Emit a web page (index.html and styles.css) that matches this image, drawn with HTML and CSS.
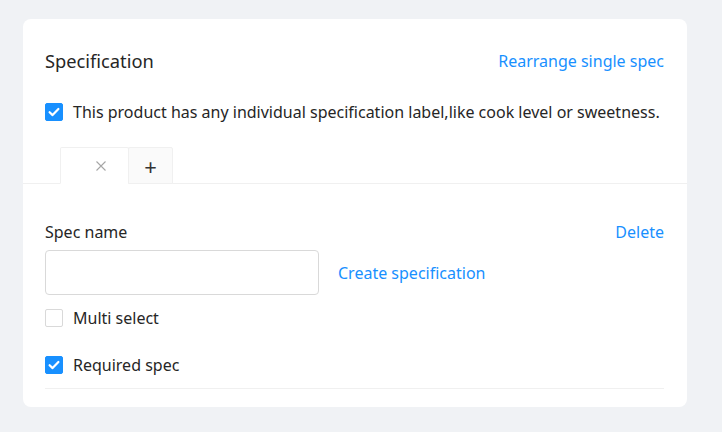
FILE: index.html
```html
<!DOCTYPE html>
<html>
<head>
<meta charset="utf-8">
<link rel="stylesheet" href="styles.css">
</head>
<body>
<div class="card">
  <div class="head">
    <div class="title">Specification</div>
    <a class="link">Rearrange single spec</a>
  </div>
  <label class="check-row first">
    <span class="box checked"><svg viewBox="0 0 18 18" width="18" height="18"><path d="M4.6 9.2 L7.6 12.1 L13.4 6" fill="none" stroke="#fff" stroke-width="2.2" stroke-linecap="round" stroke-linejoin="round"/></svg></span>
    <span class="label">This product has any individual specification label,like cook level or sweetness.</span>
  </label>
  <div class="tabs">
    <div class="tab active"><svg class="close" viewBox="0 0 10 10" width="10" height="10"><path d="M0.5 0.5 L9.5 9.5 M9.5 0.5 L0.5 9.5" stroke="#a6a6a6" stroke-width="1.1" fill="none"/></svg></div>
    <div class="tab add">+</div>
  </div>
  <div class="panel">
    <div class="row-head">
      <span class="label">Spec name</span>
      <a class="link">Delete</a>
    </div>
    <div class="input-row">
      <input class="input" type="text">
      <a class="link">Create specification</a>
    </div>
    <label class="check-row multi">
      <span class="box"></span>
      <span class="label">Multi select</span>
    </label>
    <label class="check-row req">
      <span class="box checked"><svg viewBox="0 0 18 18" width="18" height="18"><path d="M4.6 9.2 L7.6 12.1 L13.4 6" fill="none" stroke="#fff" stroke-width="2.2" stroke-linecap="round" stroke-linejoin="round"/></svg></span>
      <span class="label">Required spec</span>
    </label>
    <div class="divider"></div>
  </div>
</div>
</body>
</html>
```
FILE: styles.css
```css
* { box-sizing: border-box; }
body {
  margin: 0;
  background: #f0f2f5;
  font-family: "Noto Sans", "Open Sans", sans-serif;
  color: #262626;
  font-size: 16px;
  padding: 19px 0 0 23px;
}
.card {
  width: 664px;
  height: 388px;
  background: #fff;
  border-radius: 8px;
}
.head {
  display: flex;
  justify-content: space-between;
  align-items: center;
  padding: 30px 23px 0 22px;
  height: 54px;
}
.title { font-size: 18.3px; line-height: 24px; }
.link { color: #1890ff; font-size: 16px; line-height: 24px; cursor: pointer; }
.check-row {
  display: flex;
  align-items: center;
  gap: 10px;
  line-height: 24px;
  height: 24px;
}
.check-row.first { margin: 27px 22px 0; }
.box {
  width: 18px;
  height: 18px;
  border-radius: 2px;
  border: 1px solid #d9d9d9;
  background: #fff;
  display: flex;
  flex: none;
}
.box.checked { background: #1890ff; border-color: #1890ff; }
.box svg { margin: -1px; flex: none; }
.tabs {
  display: flex;
  margin-top: 23px;
  padding-left: 37px;
  border-bottom: 1px solid #f0f0f0;
  height: 37px;
}
.tab {
  height: 37px;
  border: 1px solid #f0f0f0;
  border-radius: 2px 2px 0 0;
  display: flex;
  align-items: center;
  justify-content: center;
}
.tab.active { width: 69px; background: #fff; border-bottom-color: #fff; justify-content: flex-end; padding-right: 22px; }
.tab.add { width: 45px; margin-left: -1px; background: #fafafa; font-size: 22px; color: #333; }
.panel { padding: 36px 23px 0 22px; }
.row-head { display: flex; justify-content: space-between; line-height: 24px; }
.input-row { display: flex; align-items: center; gap: 19px; margin-top: 6px; }
.input {
  width: 274px;
  height: 45px;
  border: 1px solid #d9d9d9;
  border-radius: 4px;
  outline: none;
}
.check-row.multi { margin-top: 11px; }
.check-row.req { margin-top: 23px; }
.divider { height: 1px; background: #f0f0f0; margin-top: 11px; }
```
